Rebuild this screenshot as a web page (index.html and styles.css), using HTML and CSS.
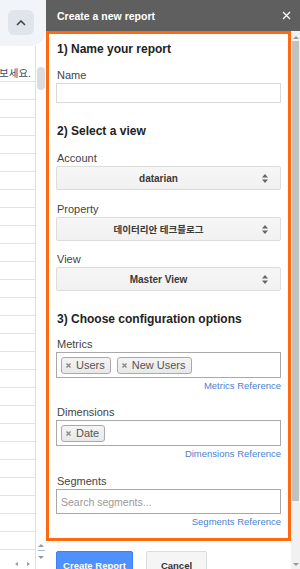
FILE: index.html
```html
<!DOCTYPE html>
<html lang="en">
<head>
    <meta charset="UTF-8">
    <meta name="viewport" content="width=device-width, initial-scale=1.0">
    <title>Create a new report</title>
    <link rel="stylesheet" href="styles.css">
</head>
<body>
<div class="page">
    <!-- Spreadsheet behind the sidebar -->
    <div class="sheet">
        <div class="sheet-top">
            <div class="collapse-btn">
                <svg width="10" height="6" viewBox="0 0 10 6"><path d="M1 5 L5 1 L9 5" fill="none" stroke="#444" stroke-width="1.6"/></svg>
            </div>
        </div>
        <div class="sheet-body">
            <div class="cells">
                <div class="cell-first"><span>보세요.</span></div>
                <div class="cell-rows"></div>
                <div class="hscroll">
                    <span class="arrow-left"></span>
                    <span class="arrow-right"></span>
                </div>
            </div>
            <div class="sheet-scroll">
                <div class="sheet-thumb"></div>
                <div class="spacer"></div>
                <span class="arrow-up"></span>
                <span class="sheet-mark"></span>
                <span class="arrow-down"></span>
            </div>
        </div>
    </div>

    <!-- Add-on sidebar -->
    <div class="sidebar">
        <div class="sidebar-header">
            <span>Create a new report</span>
            <svg width="9" height="9" viewBox="0 0 9 9"><path d="M1 1 L8 8 M8 1 L1 8" stroke="#fff" stroke-width="1.3"/></svg>
        </div>
        <div class="sidebar-main">
            <div class="sidebar-content">
                <div class="report-form">
                    <h2 class="step first">1) Name your report</h2>
                    <div class="field name-field">
                        <label>Name</label>
                        <input class="text-input" type="text">
                    </div>

                    <h2 class="step">2) Select a view</h2>
                    <div class="field">
                        <label>Account</label>
                        <div class="select"><span>datarian</span><svg class="updown" width="6" height="9" viewBox="0 0 6 9"><path d="M3 0 L6 3.5 L0 3.5 Z M3 9 L6 5.5 L0 5.5 Z" fill="#666"/></svg></div>
                    </div>
                    <div class="field">
                        <label>Property</label>
                        <div class="select"><span class="ko">데이터리안 테크블로그</span><svg class="updown" width="6" height="9" viewBox="0 0 6 9"><path d="M3 0 L6 3.5 L0 3.5 Z M3 9 L6 5.5 L0 5.5 Z" fill="#666"/></svg></div>
                    </div>
                    <div class="field view-field">
                        <label>View</label>
                        <div class="select"><span>Master View</span><svg class="updown" width="6" height="9" viewBox="0 0 6 9"><path d="M3 0 L6 3.5 L0 3.5 Z M3 9 L6 5.5 L0 5.5 Z" fill="#666"/></svg></div>
                    </div>

                    <h2 class="step">3) Choose configuration options</h2>
                    <div class="field metrics-field">
                        <label>Metrics</label>
                        <div class="chip-box">
                            <span class="chip"><svg width="5" height="5" viewBox="0 0 5 5"><path d="M0.5 0.5 L4.5 4.5 M4.5 0.5 L0.5 4.5" stroke="#888" stroke-width="1.4"/></svg>Users</span>
                            <span class="chip"><svg width="5" height="5" viewBox="0 0 5 5"><path d="M0.5 0.5 L4.5 4.5 M4.5 0.5 L0.5 4.5" stroke="#888" stroke-width="1.4"/></svg>New Users</span>
                        </div>
                        <a class="ref-link" href="#">Metrics Reference</a>
                    </div>
                    <div class="field dims-field">
                        <label>Dimensions</label>
                        <div class="chip-box">
                            <span class="chip"><svg width="5" height="5" viewBox="0 0 5 5"><path d="M0.5 0.5 L4.5 4.5 M4.5 0.5 L0.5 4.5" stroke="#888" stroke-width="1.4"/></svg>Date</span>
                        </div>
                        <a class="ref-link" href="#">Dimensions Reference</a>
                    </div>
                    <div class="field segments-field">
                        <label>Segments</label>
                        <input class="search-input" type="text" placeholder="Search segments...">
                        <a class="ref-link" href="#">Segments Reference</a>
                    </div>
                </div>

                <div class="actions">
                    <button class="btn-create">Create Report</button>
                    <button class="btn-cancel">Cancel</button>
                </div>
            </div>
            <div class="scrollbar">
                <span class="arrow-up"></span>
                <div class="scroll-thumb"></div>
                <div class="spacer"></div>
                <span class="arrow-down"></span>
            </div>
        </div>
    </div>
</div>
</body>
</html>
```

FILE: styles.css
```css
/* Global */
* {
    box-sizing: border-box;
}

body {
    margin: 0;
    width: 300px;
    height: 569px;
    overflow: hidden;
    background: #fff;
    font-family: "Liberation Sans", Arial, "Noto Sans CJK KR", sans-serif;
    color: #333;
}

.page {
    display: flex;
    height: 569px;
}

/* Spreadsheet strip on the left */
.sheet {
    width: 46px;
    display: flex;
    flex-direction: column;
}

.sheet-top {
    height: 46px;
    background: #f1f4f9;
    border-bottom-right-radius: 16px;
    padding: 10px 0 0 8px;
}

.collapse-btn {
    width: 26px;
    height: 25px;
    border-radius: 6px;
    background: #e0e5ec;
    display: flex;
    align-items: center;
    justify-content: center;
}

.sheet-body {
    flex: 1;
    display: flex;
    min-height: 0;
}

.cells {
    width: 36px;
    border-right: 1px solid #e0e0e0;
    display: flex;
    flex-direction: column;
}

.cell-first {
    height: 36px;
    border-bottom: 1px solid #e2e2e2;
    display: flex;
    justify-content: flex-end;
    align-items: flex-end;
    overflow: hidden;
    white-space: nowrap;
    font-size: 10.5px;
    color: #3c4a66;
    padding: 0 4px 1px 0;
}

.cell-rows {
    flex: 1;
    background: repeating-linear-gradient(to bottom, transparent 0, transparent 17px, #e2e2e2 17px, #e2e2e2 18px);
}

.hscroll {
    height: 10px;
    display: flex;
    justify-content: flex-end;
    align-items: center;
    gap: 9px;
    padding-right: 5px;
}

.arrow-left,
.arrow-right {
    width: 0;
    height: 0;
    border-top: 2px solid transparent;
    border-bottom: 2px solid transparent;
}

.arrow-left {
    border-right: 3px solid #999;
}

.arrow-right {
    border-left: 3px solid #999;
}

.sheet-scroll {
    width: 10px;
    display: flex;
    flex-direction: column;
    align-items: center;
    padding-bottom: 10px;
}

.sheet-thumb {
    margin-top: 21px;
    width: 8px;
    height: 23px;
    border-radius: 4px;
    background: #dadce0;
}

.spacer {
    flex: 1;
}

.arrow-up,
.arrow-down {
    width: 0;
    height: 0;
    border-left: 3px solid transparent;
    border-right: 3px solid transparent;
}

.arrow-up {
    border-bottom: 3px solid #999;
}

.arrow-down {
    border-top: 3px solid #999;
}

.sheet-mark {
    width: 7px;
    height: 1px;
    background: #a8c0e8;
    margin: 3px 0 5px;
}

/* Sidebar */
.sidebar {
    width: 254px;
    display: flex;
    flex-direction: column;
}

.sidebar-header {
    height: 31px;
    background: #5f5f5f;
    color: #fff;
    display: flex;
    align-items: center;
    justify-content: space-between;
    padding: 0 9px 0 11px;
    font-size: 10.5px;
    font-weight: bold;
}

.sidebar-main {
    flex: 1;
    display: flex;
    min-height: 0;
}

.sidebar-content {
    width: 245px;
}

.report-form {
    height: 510px;
    border: 3px solid #ff6a10;
    padding: 0 7px;
}

.step {
    margin: 20px 0 0;
    font-size: 12px;
    line-height: 16px;
    font-weight: bold;
    color: #222;
    padding-left: 1px;
}

.step.first {
    margin-top: 7px;
}

.field {
    margin-top: 11px;
    display: flex;
    flex-direction: column;
}

.name-field,
.view-field {
    margin-top: 10px;
}

.metrics-field {
    margin-top: 9px;
}

.segments-field {
    margin-top: 12px;
}

.field label {
    font-size: 11px;
    line-height: 16px;
    color: #444;
    padding-left: 1px;
}

.text-input {
    height: 20px;
    border: 1px solid #d9d9d9;
    margin: 0;
}

.select {
    height: 24px;
    border: 1px solid #dcdcdc;
    border-radius: 2px;
    background: linear-gradient(#f6f6f6, #f1f1f1);
    display: flex;
    align-items: center;
    padding: 0 12px 0 6px;
    font-size: 10px;
    font-weight: bold;
    color: #3a3a3a;
}

.select span {
    flex: 1;
    text-align: center;
    padding-right: 8px;
}

.select .ko {
    font-size: 9.5px;
}

.chip-box {
    height: 26px;
    border: 1px solid #a9a9a9;
    display: flex;
    align-items: center;
    gap: 6px;
    padding: 0 4px;
}

.chip {
    height: 17px;
    display: flex;
    align-items: center;
    gap: 5px;
    padding: 0 5px 0 4px;
    border: 1px solid #aaa;
    border-radius: 3px;
    background: linear-gradient(#f4f4f4, #e8e8e8);
    font-size: 11px;
    color: #555;
}

.ref-link {
    align-self: flex-end;
    margin-top: 1px;
    font-size: 9.5px;
    line-height: 14px;
    color: #4a7fd5;
    text-decoration: none;
}

.search-input {
    height: 25px;
    border: 1px solid #a9a9a9;
    margin: 0;
    padding: 0 4px;
    font-family: inherit;
    font-size: 10.5px;
}

.search-input::placeholder {
    color: #9a9a9a;
}

/* Buttons below the form */
.actions {
    display: flex;
    gap: 13px;
    padding: 10px 0 0 10px;
}

.actions button {
    height: 28px;
    border-radius: 2px;
    font-family: inherit;
    font-size: 9.5px;
    font-weight: bold;
}

.btn-create {
    width: 77px;
    background: #4d90fe;
    color: #fff;
    border: 1px solid #3d82f0;
}

.btn-cancel {
    width: 61px;
    background: #f5f5f5;
    color: #333;
    border: 1px solid #dcdcdc;
}

/* Sidebar scrollbar */
.scrollbar {
    width: 9px;
    background: #f1f1f1;
    display: flex;
    flex-direction: column;
    align-items: center;
    padding: 5px 0 3px;
}

.scroll-thumb {
    margin-top: 2px;
    width: 7px;
    height: 460px;
    background: #c1c1c1;
}
```
